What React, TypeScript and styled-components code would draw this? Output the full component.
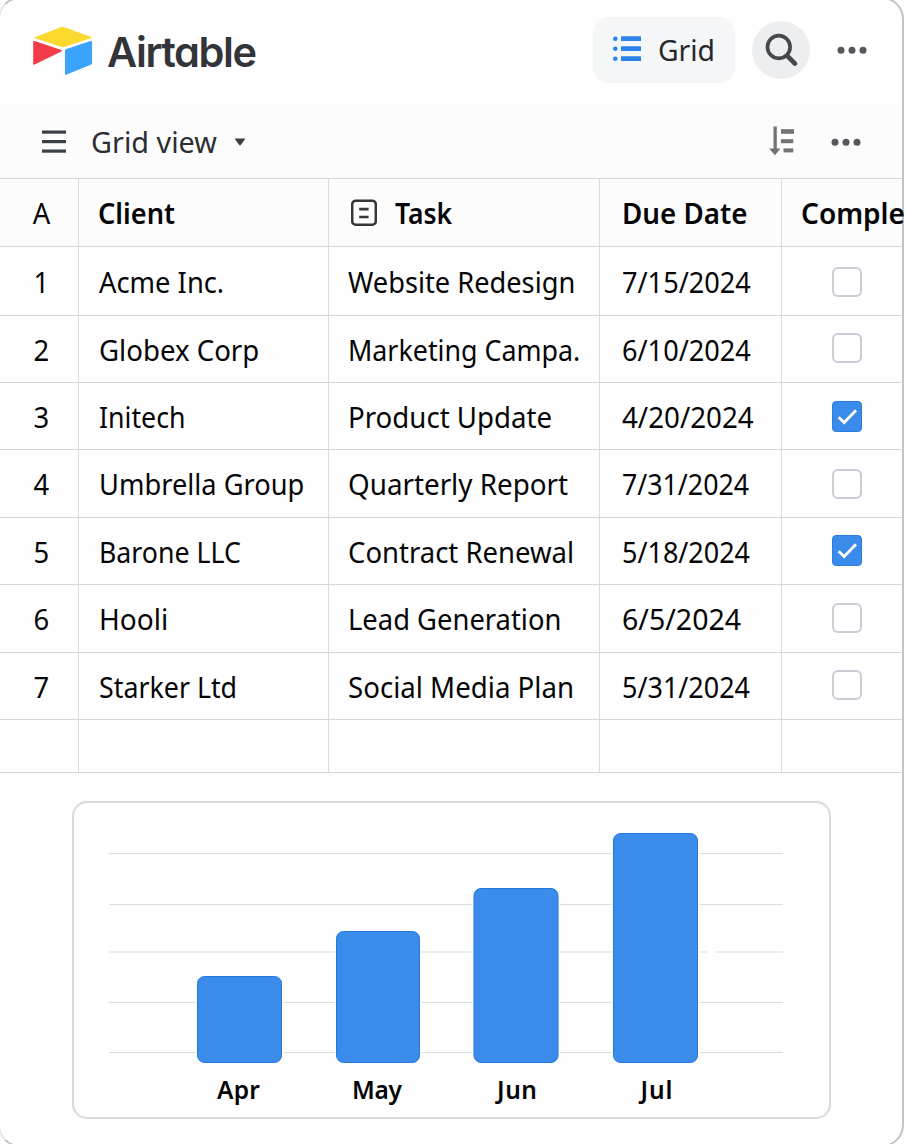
import React from 'react';
import styled, { createGlobalStyle } from 'styled-components';

const GlobalStyle = createGlobalStyle`
  html, body { margin: 0; padding: 0; }
  body {
    background: #fff;
    color: #060608;
    font-family: "Noto Sans", "Open Sans", sans-serif;
    overflow: hidden;
  }
  *, *::before, *::after { box-sizing: border-box; }
`;

const Frame = styled.div`
  width: 906px;
  height: 1150px;
  margin: -3px 0 0 -2px;
  padding-top: 1px;
  border: 2px solid #bcc5cc;
  border-left-color: #e3e9ee;
  border-radius: 22px;
  background: #fefefe;
`;

const TopBar = styled.header`
  display: flex;
  align-items: center;
  height: 104px;
  padding: 0 35px 4px 32px;
`;

const Brand = styled.div`
  display: flex;
  align-items: center;
  margin-right: auto;
  padding-top: 3px;
`;

const BrandName = styled.span`
  margin-left: 13px;
  font: 620 41.5px/50px Inter, sans-serif;
  font-feature-settings: "cv11";
  letter-spacing: -1.4px;
  color: #33343a;
`;

const ViewButton = styled.button`
  display: flex;
  align-items: center;
  width: 142px;
  height: 66px;
  padding: 0 0 0 20px;
  border: 0;
  border-radius: 15px;
  background: #f4f6f8;
  font: 400 30px/40px "Noto Sans", sans-serif;
  color: #26282c;
  svg { margin-bottom: 2px; }
`;

const RoundButton = styled.button`
  display: grid;
  place-items: center;
  width: 58px;
  height: 58px;
  margin: 0 27px 1px 17px;
  padding: 0;
  border: 0;
  border-radius: 50%;
  background: #eceef0;
`;

const ViewBar = styled.div`
  display: flex;
  align-items: center;
  height: 74px;
  padding: 2px 41px 0 41px;
  background: #fcfcfd;
`;

const Spacer = styled.div`
  flex: 1;
`;

const Gap = styled.div<{ $w: number }>`
  flex: none;
  width: ${(p) => p.$w}px;
`;

const Table = styled.div`
  border-top: 1px solid #d3d7db;
`;

const Row = styled.div<{ $h: number; $head?: boolean }>`
  display: grid;
  grid-template-columns: 79px 250px 271px 182px 1fr;
  height: ${(p) => p.$h}px;
  border-bottom: 1px solid #d3d7db;
  background: ${(p) => (p.$head ? '#fcfcfd' : 'transparent')};
`;

const Cell = styled.div<{ $pad?: number; $center?: boolean }>`
  display: flex;
  align-items: center;
  justify-content: ${(p) => (p.$center ? 'center' : 'flex-start')};
  min-width: 0;
  padding: 1.5px 0 0 ${(p) => p.$pad ?? 0}px;
  border-right: 1px solid #d8dcdf;
  &:last-child { border-right: 0; }
`;

const Label = styled.span<{ $fit?: number; $bold?: boolean; $mid?: boolean }>`
  display: inline-block;
  font-size: 29.5px;
  font-weight: ${(p) => (p.$bold ? 600 : 400)};
  line-height: 40px;
  white-space: nowrap;
  transform: scaleX(${(p) => p.$fit ?? 0.93});
  transform-origin: ${(p) => (p.$mid ? 'center' : 'left center')};
`;

const ViewName = styled(Label)`
  margin: 0 14px 0 24px;
  color: #2c2e33;
`;

const Check = styled.span<{ $on: boolean; $lift: number }>`
  display: grid;
  place-items: center;
  width: 30px;
  height: ${(p) => (p.$on ? 31 : 30)}px;
  margin: 0 0 ${(p) => p.$lift}px 9px;
  border: ${(p) => (p.$on ? '1px solid #2b7de0' : '2px solid #c9ced6')};
  border-radius: ${(p) => (p.$on ? 4 : 6)}px;
  background: ${(p) => (p.$on ? '#3b8beb' : '#fff')};
`;

const ChartCard = styled.section`
  width: 759px;
  height: 318px;
  margin: 28px 0 0 72px;
  border: 2px solid #d5dade;
  border-radius: 15px;
  svg { display: block; }
`;

const Logo = () => (
  <svg width="62" height="52" viewBox="0 0 62 52">
    <path d="M29.200.900Q30.500.400 31.800.900L59.400 10.900Q60.400 11.400 59.400 11.900L33 20.800Q31 21.500 29 20.800L3 12.300Q2 11.800 3 11.300Z" fill="#fbd92f" />
    <path d="M1.200 16.200Q1.200 14.600 2.700 15.100L29.300 24Q31 24.800 29.300 25.600L2.700 38.600Q1.200 39.200 1.200 37.700Z" fill="#f43c48" />
    <path d="M33 25Q33 23.500 34.400 23L58.600 15.100Q60 14.700 60 16.200V37Q60 38.200 58.800 38.700L34.600 48.600Q33 49.200 33 47.700Z" fill="#3ba3fb" />
  </svg>
);

const ListIcon = () => (
  <svg width="28" height="26" viewBox="0 0 28 26" fill="#2b83ea">
    {[2.7, 12.7, 22.7].map((y) => (
      <g key={y}>
        <circle cx="2.300" cy={y} r="2.300" />
        <rect x="8" y={y - 2.4} width="20" height="4.800" rx=".5" />
      </g>
    ))}
  </svg>
);

const SearchIcon = () => (
  <svg width="34" height="34" viewBox="0 0 34 34" fill="none" stroke="#45484d">
    <circle cx="14.800" cy="14" r="11.300" strokeWidth="3.700" />
    <path d="M22.800 22.300L31 30.600" strokeWidth="4.600" />
    <path d="M30 29.700L31 30.700" strokeWidth="4.400" strokeLinecap="round" />
  </svg>
);

const DotsSvg = styled.svg`
  flex: none;
`;

const Dots = () => (
  <DotsSvg width="30" height="8" viewBox="0 0 30 8" fill="#55575b">
    <circle cx="4" cy="4.300" r="3.500" />
    <circle cx="15" cy="4.300" r="3.500" />
    <circle cx="26" cy="4.300" r="3.500" />
  </DotsSvg>
);

const MenuIcon = () => (
  <svg width="26" height="24" viewBox="0 0 26 24" fill="#3b4047">
    <rect x="1" y=".5" width="24" height="3.200" />
    <rect x="1" y="10" width="24" height="3.200" />
    <rect x="1" y="19.500" width="24" height="3.200" />
  </svg>
);

const Caret = () => (
  <svg width="12" height="8" viewBox="0 0 12 8">
    <path d="M.5.500H11.500L6.500 7.200Q6 7.800 5.500 7.200Z" fill="#3b3d42" />
  </svg>
);

const SortSvg = styled.svg`
  flex: none;
  margin-bottom: 2px;
`;

const SortIcon = () => (
  <SortSvg width="28" height="30" viewBox="0 0 28 30" fill="#717376">
    <path d="M5.500.500H8.800V22.500H12.500L7 29.300L1 22.500H5.500Z" />
    <rect x="13" y="3.200" width="13" height="4.600" />
    <rect x="13" y="13.200" width="12.300" height="4" />
    <rect x="15.500" y="22.400" width="9.800" height="4" />
  </SortSvg>
);

const TaskIcon = () => (
  <svg width="26" height="28" viewBox="0 0 26 28" fill="none" stroke="#35373b">
    <rect x="1.200" y="1.700" width="23.600" height="24" rx="3.500" strokeWidth="2.500" />
    <path d="M8.200 10.100H17.600M8.200 18H17.600" strokeWidth="2.600" />
  </svg>
);

const Tick = () => (
  <svg width="22" height="18" viewBox="0 0 22 18" fill="none" stroke="#fff" strokeWidth="2.800">
    <path d="M2.600 9.200L8.200 14.500L20 2.200" />
  </svg>
);

type Item = {
  client: string;
  task: string;
  due: string;
  done: boolean;
  height: number;
  lift: number;
  fit: [number, number, number];
};

const items: Item[] = [
  { client: 'Acme Inc.', task: 'Website Redesign', due: '7/15/2024', done: false, height: 69, lift: 0.5, fit: [0.926, 0.923, 0.92] },
  { client: 'Globex Corp', task: 'Marketing Campa.', due: '6/10/2024', done: false, height: 67, lift: 3.5, fit: [0.936, 0.909, 0.92] },
  { client: 'Initech', task: 'Product Update', due: '4/20/2024', done: true, height: 67, lift: 0.5, fit: [0.905, 0.937, 0.94] },
  { client: 'Umbrella Group', task: 'Quarterly Report', due: '7/31/2024', done: false, height: 68, lift: 0.5, fit: [0.924, 0.942, 0.907] },
  { client: 'Barone LLC', task: 'Contract Renewal', due: '5/18/2024', done: true, height: 67, lift: 2.5, fit: [0.905, 0.932, 0.914] },
  { client: 'Hooli', task: 'Lead Generation', due: '6/5/2024', done: false, height: 68, lift: 2.5, fit: [0.952, 0.928, 0.967] },
  { client: 'Starker Ltd', task: 'Social Media Plan', due: '5/31/2024', done: false, height: 67, lift: 4.5, fit: [0.908, 0.937, 0.914] },
];

const bars = [
  { month: 'Apr', x: 197, top: 976, w: 85, tx: 217, tw: 43 },
  { month: 'May', x: 336, top: 931, w: 84, tx: 352, tw: 50 },
  { month: 'Jun', x: 473.5, top: 888, w: 85, tx: 497, tw: 40 },
  { month: 'Jul', x: 613, top: 833, w: 85, tx: 640.5, tw: 32 },
];

const Chart = () => (
  <svg width="755" height="314" viewBox="74 803 755 314">
    {[853, 904, 951.5, 1002, 1052].map((y) => (
      <path key={y} d={`M109 ${y + 0.5}H783`} stroke="#d9dcdf" strokeWidth="1.200" />
    ))}
    <path d="M707 952H715" stroke="#fefefe" strokeWidth="3" />
    {bars.map((b) => (
      <g key={b.month}>
        <rect x={b.x - 1.5} y={b.top} width={b.w + 3} height={1063 - b.top} fill="#fefefe" />
        <rect x={b.x + 0.5} y={b.top + 0.5} width={b.w - 1} height={1062 - b.top} rx="7" fill="#3b8beb" stroke="#2479dc" />
        <text x={b.tx} y="1099" textLength={b.tw} fontSize="24.500" fontWeight="600" fill="#060608">{b.month}</text>
      </g>
    ))}
  </svg>
);

export default function App() {
  return (
    <>
      <GlobalStyle />
      <Frame>
        <TopBar>
          <Brand>
            <Logo />
            <BrandName>Airtable</BrandName>
          </Brand>
          <ViewButton>
            <ListIcon />
            <Gap $w={17} />
            <Label $fit={0.96}>Grid</Label>
          </ViewButton>
          <RoundButton>
            <SearchIcon />
          </RoundButton>
          <Dots />
        </TopBar>
        <ViewBar>
          <MenuIcon />
          <ViewName $fit={0.977}>Grid view</ViewName>
          <Caret />
          <Spacer />
          <SortIcon />
          <Gap $w={35} />
          <Dots />
        </ViewBar>
        <Table>
          <Row $h={68} $head>
            <Cell $center $pad={5}><Label $mid>A</Label></Cell>
            <Cell $pad={19}><Label $bold $fit={0.922}>Client</Label></Cell>
            <Cell $pad={22}><TaskIcon /><Gap $w={18} /><Label $bold $fit={0.9}>Task</Label></Cell>
            <Cell $pad={21.5}><Label $bold $fit={0.94}>Due Date</Label></Cell>
            <Cell $pad={19}><Label $bold $fit={0.95}>Comple</Label></Cell>
          </Row>
          {items.map((item, i) => (
            <Row key={item.client} $h={item.height}>
              <Cell $center $pad={5}><Label $mid>{i + 1}</Label></Cell>
              <Cell $pad={19.5}><Label $fit={item.fit[0]}>{item.client}</Label></Cell>
              <Cell $pad={19}><Label $fit={item.fit[1]}>{item.task}</Label></Cell>
              <Cell $pad={22}><Label $fit={item.fit[2]}>{item.due}</Label></Cell>
              <Cell $center>
                <Check $on={item.done} $lift={item.lift}>{item.done && <Tick />}</Check>
              </Cell>
            </Row>
          ))}
          <Row $h={53}>
            <Cell /><Cell /><Cell /><Cell /><Cell />
          </Row>
        </Table>
        <ChartCard>
          <Chart />
        </ChartCard>
      </Frame>
    </>
  );
}
